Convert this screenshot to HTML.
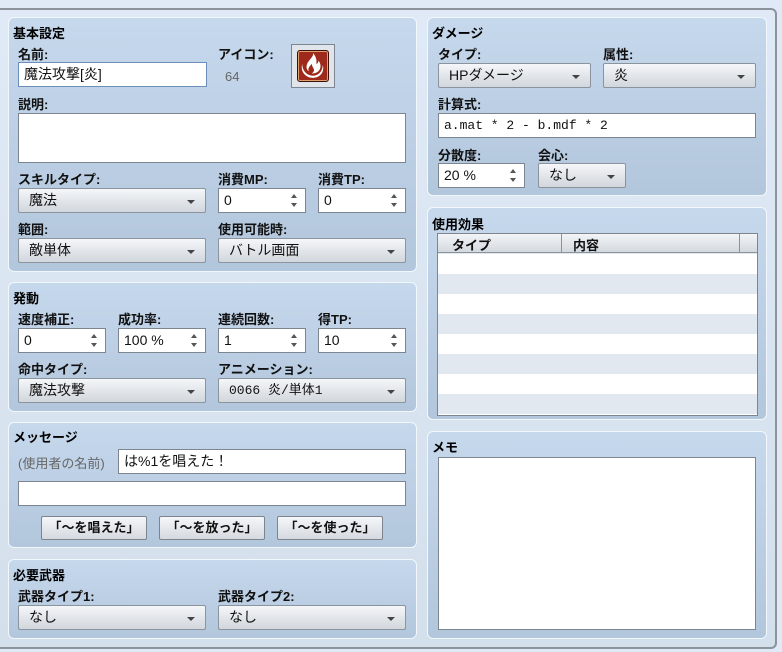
<!DOCTYPE html>
<html><head><meta charset="utf-8"><style>
*{box-sizing:border-box;margin:0;padding:0}
body{width:782px;height:652px;overflow:hidden;background:#dfeaf6;font-family:"Liberation Sans","Noto Sans CJK JP",sans-serif;font-size:13px;color:#111;position:relative}
.a{position:absolute}
.frame{left:0;top:8px;width:777px;height:641px;border:2px solid #8c939b;border-left:none;border-radius:0 6px 6px 0;background:linear-gradient(#dfeaf6,#d3dfeb)}
.p{position:absolute;border:1px solid #f2f7fc;border-radius:6px;background:linear-gradient(#c6d8ec,#b2c6dc)}
.t{position:absolute;font-weight:bold;font-size:13px;color:#000}
.l{position:absolute;font-size:13px;color:#111;font-weight:bold}
.in{position:absolute;background:#fff;border:1px solid #7c8590;height:25px;padding:3px 5px;font-size:14px;line-height:17px}
.sel{position:absolute;height:25px;border:1px solid #8b939c;border-radius:2px;background:linear-gradient(#f5f7f9,#dfe3e8 60%,#d2d7dd);padding:3px 10px;line-height:17px;font-size:14px}
.sel:after{content:"";position:absolute;right:10px;top:11px;border-left:4px solid transparent;border-right:4px solid transparent;border-top:4px solid #444}
.sp:after{content:"";position:absolute;right:8px;top:5px;border-left:3px solid transparent;border-right:3px solid transparent;border-bottom:4px solid #555}
.sp:before{content:"";position:absolute;right:8px;top:14px;border-left:3px solid transparent;border-right:3px solid transparent;border-top:4px solid #555}
.btn{position:absolute;height:24px;border:1px solid #7c848d;border-radius:2px;background:linear-gradient(#f5f7f9,#d5dae0);text-align:center;line-height:22px;font-weight:bold;font-size:13px}
.mono{font-family:"Liberation Mono","Noto Sans CJK JP",monospace;font-size:13px}
</style></head><body>
<div class="a frame"></div>

<div class="p" style="left:8px;top:17px;width:409px;height:255px"></div>
<div class="t" style="left:13px;top:23px">基本設定</div>
<div class="l" style="left:18px;top:44px">名前:</div>
<div class="in" style="left:18px;top:62px;width:189px;border-color:#6d8eb8">魔法攻撃[炎]</div>
<div class="l" style="left:218px;top:44px">アイコン:</div>
<div class="l" style="left:225px;top:69px;color:#666;font-weight:normal">64</div>
<div class="a" style="left:291px;top:44px;width:44px;height:44px;border:1px solid #7c8590;background:#dfe5ea"></div>
<div class="a" style="left:297px;top:50px;width:32px;height:32px;border-radius:3px;background:#9e2a1c;border:1px solid #3a1008;box-shadow:inset 0 0 0 1px #e0a070"></div>
<svg class="a" style="left:299px;top:52px" width="28" height="28" viewBox="0 0 26 26"><path d="M13 1c1 4-6 7-6 13 0 2 1 3 2 4-1-3 1-5 3-7 0 3 2 4 2 6 0 1-1 2-2 3 5 0 8-3 8-7 0-2-1-4-2-5 0 2-1 3-2 3 1-4-1-8-3-10z M3 11c-2 7 3 13 10 13 7 0 11-6 9-12 0 6-4 10-9 10-5 0-10-4-10-11z" fill="#fff"/></svg>
<div class="l" style="left:18px;top:94px">説明:</div>
<div class="in" style="left:18px;top:113px;width:388px;height:50px"></div>
<div class="l" style="left:18px;top:169px">スキルタイプ:</div>
<div class="sel" style="left:18px;top:188px;width:188px">魔法</div>
<div class="l" style="left:218px;top:169px">消費MP:</div>
<div class="in sp" style="left:218px;top:188px;width:88px">0</div>
<div class="l" style="left:318px;top:169px">消費TP:</div>
<div class="in sp" style="left:318px;top:188px;width:88px">0</div>
<div class="l" style="left:18px;top:219px">範囲:</div>
<div class="sel" style="left:18px;top:238px;width:188px">敵単体</div>
<div class="l" style="left:218px;top:219px">使用可能時:</div>
<div class="sel" style="left:218px;top:238px;width:188px">バトル画面</div>

<div class="p" style="left:8px;top:282px;width:409px;height:130px"></div>
<div class="t" style="left:13px;top:288px">発動</div>
<div class="l" style="left:18px;top:309px">速度補正:</div>
<div class="in sp" style="left:18px;top:328px;width:88px">0</div>
<div class="l" style="left:118px;top:309px">成功率:</div>
<div class="in sp" style="left:118px;top:328px;width:88px">100 %</div>
<div class="l" style="left:218px;top:309px">連続回数:</div>
<div class="in sp" style="left:218px;top:328px;width:88px">1</div>
<div class="l" style="left:318px;top:309px">得TP:</div>
<div class="in sp" style="left:318px;top:328px;width:88px">10</div>
<div class="l" style="left:18px;top:359px">命中タイプ:</div>
<div class="sel" style="left:18px;top:378px;width:188px">魔法攻撃</div>
<div class="l" style="left:218px;top:359px">アニメーション:</div>
<div class="sel mono" style="left:218px;top:378px;width:188px">0066 炎/単体1</div>

<div class="p" style="left:8px;top:422px;width:409px;height:126px"></div>
<div class="t" style="left:13px;top:427px">メッセージ</div>
<div class="l" style="left:18px;top:453px;color:#666;font-weight:normal">(使用者の名前)</div>
<div class="in" style="left:118px;top:449px;width:288px">は%1を唱えた！</div>
<div class="in" style="left:18px;top:481px;width:388px"></div>
<div class="btn" style="left:41px;top:516px;width:106px">「～を唱えた」</div>
<div class="btn" style="left:159px;top:516px;width:106px">「～を放った」</div>
<div class="btn" style="left:277px;top:516px;width:106px">「～を使った」</div>

<div class="p" style="left:8px;top:559px;width:409px;height:80px"></div>
<div class="t" style="left:13px;top:565px">必要武器</div>
<div class="l" style="left:18px;top:586px">武器タイプ1:</div>
<div class="sel" style="left:18px;top:605px;width:188px">なし</div>
<div class="l" style="left:218px;top:586px">武器タイプ2:</div>
<div class="sel" style="left:218px;top:605px;width:188px">なし</div>

<div class="p" style="left:427px;top:17px;width:340px;height:179px"></div>
<div class="t" style="left:432px;top:23px">ダメージ</div>
<div class="l" style="left:438px;top:44px">タイプ:</div>
<div class="sel" style="left:438px;top:63px;width:153px">HPダメージ</div>
<div class="l" style="left:603px;top:44px">属性:</div>
<div class="sel" style="left:603px;top:63px;width:153px">炎</div>
<div class="l" style="left:438px;top:94px">計算式:</div>
<div class="in mono" style="left:438px;top:113px;width:318px">a.mat * 2 - b.mdf * 2</div>
<div class="l" style="left:438px;top:145px">分散度:</div>
<div class="in sp" style="left:438px;top:163px;width:87px">20 %</div>
<div class="l" style="left:538px;top:145px">会心:</div>
<div class="sel" style="left:538px;top:163px;width:88px">なし</div>

<div class="p" style="left:427px;top:207px;width:340px;height:213px"></div>
<div class="t" style="left:432px;top:214px">使用効果</div>
<div class="a" style="left:437px;top:233px;width:321px;height:183px;border:1px solid #7c8590;background:repeating-linear-gradient(#fff 0 20px,#e1e8ef 20px 40px);background-position:0 20px"></div>
<div class="a" style="left:438px;top:234px;width:319px;height:19px;background:linear-gradient(#f3f5f7,#d4d9df);border-bottom:1px solid #8a929b"></div>
<div class="a" style="left:561px;top:234px;width:1px;height:19px;background:#8a929b"></div>
<div class="a" style="left:739px;top:234px;width:1px;height:19px;background:#8a929b"></div>
<div class="l" style="left:452px;top:235px;font-weight:bold">タイプ</div>
<div class="l" style="left:573px;top:235px;font-weight:bold">内容</div>

<div class="p" style="left:427px;top:431px;width:340px;height:208px"></div>
<div class="t" style="left:432px;top:437px">メモ</div>
<div class="in" style="left:438px;top:457px;width:318px;height:173px"></div>
</body></html>
